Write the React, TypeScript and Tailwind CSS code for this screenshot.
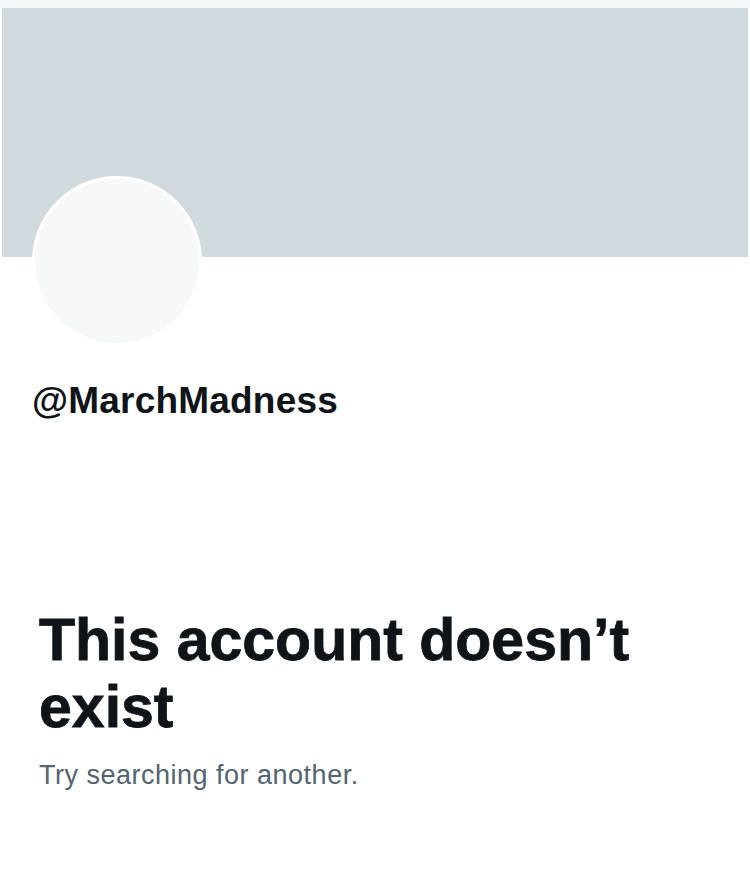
import React from 'react'

export default function App() {
  return (
    <div className="min-h-[870px] w-[750px] bg-white font-['Liberation_Sans',Arial,sans-serif]">
      {/* thin strip above the header image */}
      <div className="h-2 bg-[#f4f5f6]" />

      {/* header banner */}
      <div className="mx-[2px] h-[249px] bg-[#cfd9de]" />

      {/* avatar sits half over the banner */}
      <div className="relative -mt-[81px] ml-[32px] h-[170px] w-[170px] rounded-full border-[3px] border-white bg-[#f7f9f9]" />

      <div className="mt-[36px] pl-[32px]">
        <div className="text-[37px] font-bold leading-none tracking-[0.2px] text-[#0f1419]">
          @MarchMadness
        </div>
      </div>

      <div className="mt-[188px] pl-[39px] pr-4">
        <h1 className="text-[59px] font-extrabold leading-[67px] tracking-[0px] text-[#0f1419] [-webkit-text-stroke:0.8px_#0f1419]">
          This account doesn’t exist
        </h1>
        <p className="mt-[21px] text-[27px] leading-none tracking-[0.5px] text-[#536471]">
          Try searching for another.
        </p>
      </div>
    </div>
  )
}
